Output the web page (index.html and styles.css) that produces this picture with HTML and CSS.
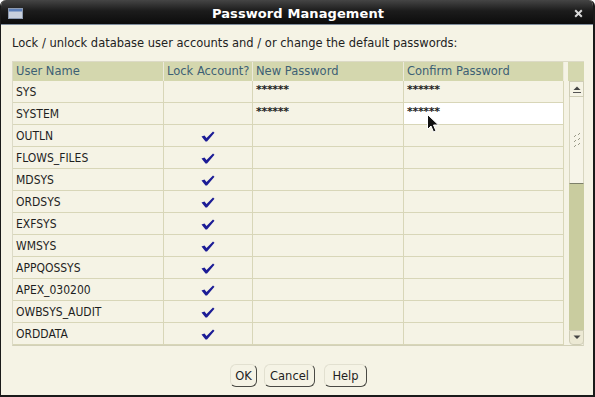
FILE: index.html
```html
<!DOCTYPE html>
<html>
<head>
<meta charset="utf-8">
<link rel="stylesheet" href="styles.css">
</head>
<body>
<div class="window">
  <div class="titlebar">
    <svg class="winicon" width="15" height="11" viewBox="0 0 15 11"><rect x="0.5" y="0.5" width="14" height="10" fill="#c9d0dc" stroke="#8e9bb0"/><rect x="1" y="1" width="13" height="2.5" fill="#5d7fb8"/></svg>
    <span class="title">Password Management</span>
    <svg class="close" width="9" height="9" viewBox="0 0 9 9"><path d="M1.2 1.2 L7.8 7.8 M7.8 1.2 L1.2 7.8" stroke="#d8d8d8" stroke-width="2"/></svg>
  </div>
  <div class="content">
    <p class="desc">Lock / unlock database user accounts and / or change the default passwords:</p>
    <div class="table">
      <div class="th">User Name</div>
      <div class="th">Lock Account?</div>
      <div class="th">New Password</div>
      <div class="th">Confirm Password</div>
      <div class="th corner"></div>

      <div class="vscroll">
        <div class="sb-btn up"><svg width="8" height="7" viewBox="0 0 8 7"><path d="M0.5 4 L4 0.5 L7.5 4 Z" fill="#444"/><rect x="0" y="6" width="8" height="1" fill="#555"/></svg></div>
        <div class="sb-thumb"><svg width="10" height="16" viewBox="0 0 10 16"><path d="M2 5 L4 3 M6 3 L8 1 M2 10 L4 8 M6 8 L8 6 M2 15 L4 13 M6 13 L8 11" stroke="#9a9a88" stroke-width="1"/></svg></div>
        <div class="sb-track"></div>
        <div class="sb-btn down"><svg width="8" height="5" viewBox="0 0 8 5"><path d="M0.5 0.5 L4 4 L7.5 0.5 Z" fill="#444"/></svg></div>
      </div>

      <div class="td">SYS</div><div class="td"></div><div class="td pw">******</div><div class="td pw">******</div>
      <div class="td">SYSTEM</div><div class="td"></div><div class="td pw">******</div><div class="td pw edit">******</div>
      <div class="td">OUTLN</div><div class="td chk"><svg class="check" width="14" height="11" viewBox="0 0 14 11"><path d="M0.5 5.5 L3.5 4.5 L5.5 7 L12 0.5 L13.5 1.8 L6 10.5 L4.5 10.5 Z" fill="#1c1c96"/></svg></div><div class="td"></div><div class="td"></div>
      <div class="td">FLOWS_FILES</div><div class="td chk"><svg class="check" width="14" height="11" viewBox="0 0 14 11"><path d="M0.5 5.5 L3.5 4.5 L5.5 7 L12 0.5 L13.5 1.8 L6 10.5 L4.5 10.5 Z" fill="#1c1c96"/></svg></div><div class="td"></div><div class="td"></div>
      <div class="td">MDSYS</div><div class="td chk"><svg class="check" width="14" height="11" viewBox="0 0 14 11"><path d="M0.5 5.5 L3.5 4.5 L5.5 7 L12 0.5 L13.5 1.8 L6 10.5 L4.5 10.5 Z" fill="#1c1c96"/></svg></div><div class="td"></div><div class="td"></div>
      <div class="td">ORDSYS</div><div class="td chk"><svg class="check" width="14" height="11" viewBox="0 0 14 11"><path d="M0.5 5.5 L3.5 4.5 L5.5 7 L12 0.5 L13.5 1.8 L6 10.5 L4.5 10.5 Z" fill="#1c1c96"/></svg></div><div class="td"></div><div class="td"></div>
      <div class="td">EXFSYS</div><div class="td chk"><svg class="check" width="14" height="11" viewBox="0 0 14 11"><path d="M0.5 5.5 L3.5 4.5 L5.5 7 L12 0.5 L13.5 1.8 L6 10.5 L4.5 10.5 Z" fill="#1c1c96"/></svg></div><div class="td"></div><div class="td"></div>
      <div class="td">WMSYS</div><div class="td chk"><svg class="check" width="14" height="11" viewBox="0 0 14 11"><path d="M0.5 5.5 L3.5 4.5 L5.5 7 L12 0.5 L13.5 1.8 L6 10.5 L4.5 10.5 Z" fill="#1c1c96"/></svg></div><div class="td"></div><div class="td"></div>
      <div class="td">APPQOSSYS</div><div class="td chk"><svg class="check" width="14" height="11" viewBox="0 0 14 11"><path d="M0.5 5.5 L3.5 4.5 L5.5 7 L12 0.5 L13.5 1.8 L6 10.5 L4.5 10.5 Z" fill="#1c1c96"/></svg></div><div class="td"></div><div class="td"></div>
      <div class="td">APEX_030200</div><div class="td chk"><svg class="check" width="14" height="11" viewBox="0 0 14 11"><path d="M0.5 5.5 L3.5 4.5 L5.5 7 L12 0.5 L13.5 1.8 L6 10.5 L4.5 10.5 Z" fill="#1c1c96"/></svg></div><div class="td"></div><div class="td"></div>
      <div class="td">OWBSYS_AUDIT</div><div class="td chk"><svg class="check" width="14" height="11" viewBox="0 0 14 11"><path d="M0.5 5.5 L3.5 4.5 L5.5 7 L12 0.5 L13.5 1.8 L6 10.5 L4.5 10.5 Z" fill="#1c1c96"/></svg></div><div class="td"></div><div class="td"></div>
      <div class="td">ORDDATA</div><div class="td chk"><svg class="check" width="14" height="11" viewBox="0 0 14 11"><path d="M0.5 5.5 L3.5 4.5 L5.5 7 L12 0.5 L13.5 1.8 L6 10.5 L4.5 10.5 Z" fill="#1c1c96"/></svg></div><div class="td"></div><div class="td"></div>
    </div>
    <div class="buttons">
      <button class="btn ok">OK</button>
      <button class="btn cancel">Cancel</button>
      <button class="btn help">Help</button>
    </div>
  </div>
  <svg class="cursor" width="13" height="20" viewBox="0 0 13 20"><path d="M0.5 0.5 L0.5 15.5 L4 12 L6.5 18 L9 17 L6.5 11 L11.5 11 Z" fill="#111" stroke="#fff" stroke-width="1"/></svg>
</div>
</body>
</html>
```
FILE: styles.css
```css
* { box-sizing: border-box; }
html, body { margin: 0; padding: 0; }
body {
  width: 595px;
  height: 397px;
  background: #ffffff;
  font-family: "DejaVu Sans", sans-serif;
  overflow: hidden;
}
.window {
  position: relative;
  width: 595px;
  height: 397px;
  background: #f5f3e5;
  border-left: 1px solid #1a1a1a;
  border-right: 2px solid #1a1a1a;
  border-bottom: 2px solid #1a1a1a;
  border-radius: 6px 6px 0 0;
  overflow: hidden;
}
.titlebar {
  height: 25px;
  display: flex;
  align-items: center;
  justify-content: center;
  position: relative;
  background: linear-gradient(#454545, #1c1c1c 45%, #0c0c0c);
  border-bottom: 1px solid #7e8c9c;
}
.winicon { position: absolute; left: 7px; top: 8px; }
.close { position: absolute; right: 10px; top: 9px; }
.title {
  color: #ffffff;
  font-weight: bold;
  font-size: 13px;
  letter-spacing: 0.1px;
  margin-left: 2px;
  margin-top: 2px;
}
.content {
  padding: 11px 10px 0 11px;
}
.desc {
  margin: 0 0 11px 0;
  font-size: 11.5px;
  line-height: 14px;
  color: #222;
}
.table {
  display: grid;
  grid-template-columns: 151px 89px 151px 160px 20px;
  grid-template-rows: 19px repeat(12, 22px);
  width: 572px;
  border: 1px solid #dcdac6;
  border-bottom: 1px solid #d2d0b8;
  background: #f5f3e5;
  font-family: "DejaVu Sans Condensed", "DejaVu Sans", sans-serif;
  font-stretch: condensed;
}
.th {
  background: #d4d7ae;
  color: #3d6074;
  font-family: "DejaVu Sans", sans-serif;
  font-stretch: normal;
  font-size: 11.5px;
  line-height: 18px;
  padding-left: 3px;
  border-right: 1px solid #eceadb;
  white-space: nowrap;
  overflow: hidden;
}
.th.corner { border-right: none; border-left: 4px solid #f5f3e5; }
.td {
  font-size: 12px;
  color: #1e1e1e;
  line-height: 21px;
  padding-left: 3px;
  padding-top: 1px;
  border-right: 1px solid #d8d6b8;
  border-bottom: 1px solid #d8d6b8;
  white-space: nowrap;
}
.td.pw {
  font-family: "DejaVu Sans", sans-serif;
  font-stretch: normal;
  font-size: 11px;
  font-weight: bold;
  line-height: 16px;
  letter-spacing: -0.3px;
  color: #202020;
}
.td.edit { background: #ffffff; }
.td.chk {
  display: flex;
  align-items: center;
  justify-content: center;
  padding-left: 0;
  padding-top: 1px;
}
.vscroll {
  grid-column: 5;
  grid-row: 2 / span 12;
  padding-left: 5px;
  display: flex;
  flex-direction: column;
}
.sb-btn {
  height: 16px;
  background: #f5f3e5;
  border: 1px solid #cfcdb6;
  display: flex;
  align-items: center;
  justify-content: center;
}
.sb-btn.down {
  height: 15px;
  background: #ece9d4;
  border-radius: 0 0 4px 4px;
}
.sb-thumb {
  height: 87px;
  background: #f6f4e8;
  border: 1px solid #d8d6c0;
  border-top: none;
  border-bottom: 1px solid #7d806a;
  display: flex;
  align-items: center;
  justify-content: center;
}
.sb-track {
  flex: 1;
  background: #c9cc9f;
}
.buttons {
  display: flex;
  justify-content: center;
  margin-top: 18px;
  padding-left: 2px;
}
.btn {
  font-family: "DejaVu Sans", sans-serif;
  font-size: 11.5px;
  color: #1e1e1e;
  height: 23px;
  padding: 0;
  text-align: center;
  background: #f5f3e5;
  border: 1px solid;
  border-color: #e2e0d0 #4a4a44 #4a4a44 #e2e0d0;
  border-radius: 6px;
}
.btn.ok { width: 27px; margin-right: 7px; }
.btn.cancel { width: 51px; margin-right: 9px; }
.btn.help { width: 43px; }
.cursor { position: absolute; left: 426px; top: 114px; }
```
